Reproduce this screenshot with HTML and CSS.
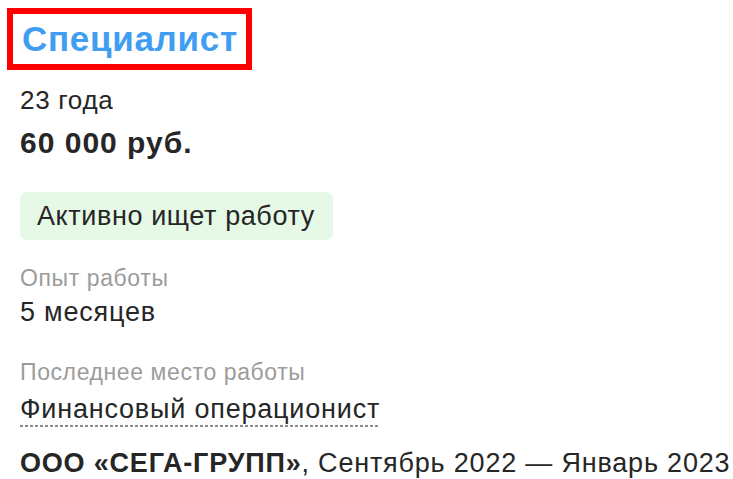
FILE: index.html
```html
<!DOCTYPE html>
<html lang="ru">
<head>
<meta charset="utf-8">
<title>Резюме</title>
<link rel="stylesheet" href="styles.css">
</head>
<body>
<div class="card">
  <div class="title-frame"><a class="title" href="#">Специалист</a></div>
  <div class="age">23 года</div>
  <div class="salary">60&nbsp;000 руб.</div>
  <div class="status">Активно ищет работу</div>
  <div class="label exp-label">Опыт работы</div>
  <div class="value exp-value">5 месяцев</div>
  <div class="label last-label">Последнее место работы</div>
  <div class="value last-value"><span class="position">Финансовый операционист</span></div>
  <div class="company"><b>ООО «СЕГА-ГРУПП»</b>, Сентябрь 2022 — Январь 2023</div>
</div>
</body>
</html>
```

FILE: styles.css
```css
html, body {
  margin: 0;
  padding: 0;
  background: #ffffff;
}

body {
  font-family: "Liberation Sans", Arial, sans-serif;
  color: #262626;
}

.card {
  display: flex;
  flex-direction: column;
  align-items: flex-start;
  padding: 8px 0 0 20px;
}

/* highlighted vacancy title */
.title-frame {
  margin-left: -13px;
  border: 6px solid #ff0000;
  padding: 0 8px 0 9px;
}

.title {
  display: block;
  font-size: 35px;
  line-height: 50px;
  letter-spacing: 0.7px;
  font-weight: bold;
  color: #3f9df2;
  text-decoration: none;
}

.age {
  margin-top: 15px;
  font-size: 26px;
  line-height: 30px;
  letter-spacing: 0.7px;
}

.salary {
  margin-top: 11px;
  font-size: 30px;
  line-height: 34px;
  letter-spacing: 1px;
  font-weight: bold;
}

/* job-search status chip */
.status {
  margin-top: 32px;
  background: #e6f8e6;
  border-radius: 7px;
  padding: 0 18px 0 17px;
  height: 48px;
  line-height: 48px;
  font-size: 27px;
  letter-spacing: 0.6px;
}

.label {
  font-size: 23px;
  line-height: 26px;
  letter-spacing: 0.6px;
  color: #9c9c9c;
}

.value {
  font-size: 27px;
  line-height: 30px;
  letter-spacing: 0.8px;
}

.exp-label {
  margin-top: 25px;
}

.exp-value {
  margin-top: 6px;
}

.last-label {
  margin-top: 32px;
}

.last-value {
  margin-top: 9px;
}

/* dotted underline under the position name */
.position {
  padding-bottom: 3px;
  background-image: repeating-linear-gradient(to right, #8a8a8a 0 3px, transparent 3px 5px);
  background-size: 100% 2px;
  background-position: 0 100%;
  background-repeat: no-repeat;
}

.company {
  margin-top: 24px;
  font-size: 27px;
  line-height: 30px;
  letter-spacing: 0.8px;
}

.company b {
  font-weight: bold;
}
```
